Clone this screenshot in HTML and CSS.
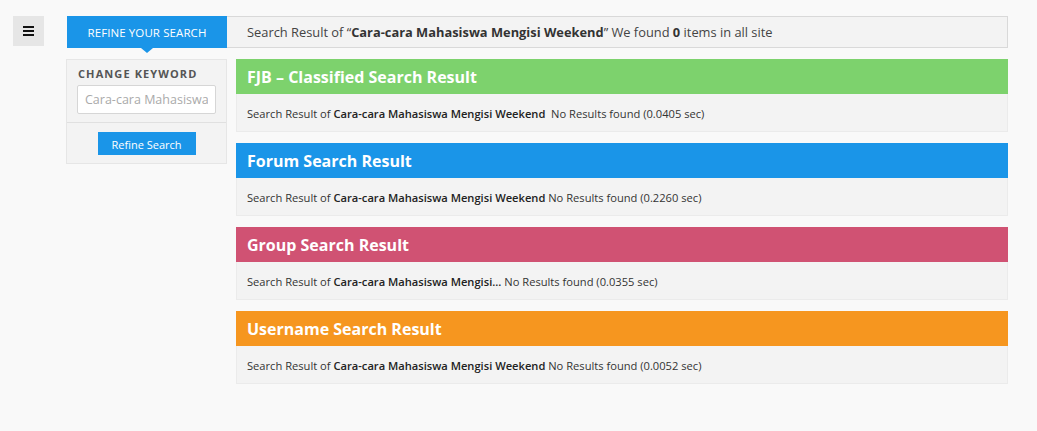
FILE: index.html
```html
<!DOCTYPE html>
<html>
<head>
<meta charset="utf-8">
<link rel="stylesheet" href="styles.css">
</head>
<body>
<div class="page">
  <button class="menu-btn" aria-label="menu">
    <svg width="11" height="10" viewBox="0 0 11 10"><rect x="0" y="0" width="11" height="2" fill="#111"/><rect x="0" y="4" width="11" height="2" fill="#111"/><rect x="0" y="8" width="11" height="2" fill="#111"/></svg>
  </button>
  <div class="main">
    <div class="topbar">
      <div class="tab">REFINE YOUR SEARCH</div>
      <div class="summary">Search Result of “<b>Cara-cara Mahasiswa Mengisi Weekend</b>” We found <b>0</b> items in all site</div>
    </div>
    <div class="columns">
      <aside class="sidebar">
        <div class="side-top">
          <div class="label">CHANGE KEYWORD</div>
          <input class="kw" type="text" value="Cara-cara Mahasiswa Mengisi Weekend">
        </div>
        <div class="side-bottom">
          <button class="refine">Refine Search</button>
        </div>
      </aside>
      <section class="results">
        <div class="block">
          <div class="head green">FJB – Classified Search Result</div>
          <div class="body">Search Result of <b>Cara-cara Mahasiswa Mengisi Weekend</b>&nbsp; No Results found (0.0405 sec)</div>
        </div>
        <div class="block">
          <div class="head blue">Forum Search Result</div>
          <div class="body">Search Result of <b>Cara-cara Mahasiswa Mengisi Weekend</b> No Results found (0.2260 sec)</div>
        </div>
        <div class="block">
          <div class="head pink">Group Search Result</div>
          <div class="body">Search Result of <b>Cara-cara Mahasiswa Mengisi...</b> No Results found (0.0355 sec)</div>
        </div>
        <div class="block">
          <div class="head orange">Username Search Result</div>
          <div class="body">Search Result of <b>Cara-cara Mahasiswa Mengisi Weekend</b> No Results found (0.0052 sec)</div>
        </div>
      </section>
    </div>
  </div>
</div>
</body>
</html>
```

FILE: styles.css
```css
* { box-sizing: border-box; }
html, body { margin: 0; padding: 0; }
body {
  background: #f9f9f9;
  font-family: "Open Sans", "DejaVu Sans", sans-serif;
  color: #333;
  width: 1037px;
  height: 431px;
  overflow: hidden;
}
.page {
  display: flex;
  align-items: flex-start;
  padding: 16px 0 0 13px;
  gap: 22px;
}
.menu-btn {
  width: 31px;
  height: 30px;
  border: none;
  background: #e6e6e6;
  display: flex;
  align-items: center;
  justify-content: center;
  padding: 0;
}
.main {
  width: 942px;
}
.topbar {
  display: flex;
  height: 32px;
  margin-left: 1px;
  background: #f3f3f3;
  border: 1px solid #d9d9d9;
  border-left: none;
}
.tab {
  position: relative;
  width: 160px;
  margin: -1px 0;
  background: #1a95e8;
  color: #fff;
  font-size: 11.5px;
  display: flex;
  align-items: center;
  justify-content: center;
  letter-spacing: 0.1px;
}
.tab::after {
  content: "";
  position: absolute;
  left: 74px;
  bottom: -5px;
  border-left: 6px solid transparent;
  border-right: 6px solid transparent;
  border-top: 5px solid #1a95e8;
}
.summary {
  font-size: 12.85px;
  color: #444;
  padding-left: 20px;
  display: flex;
  align-items: center;
  white-space: pre;
}
.summary b { color: #333; }
.columns {
  display: flex;
  gap: 9px;
  margin-top: 11px;
  align-items: flex-start;
}
.sidebar {
  width: 161px;
  background: #f3f3f3;
  border: 1px solid #e6e6e6;
}
.side-top {
  padding: 7px 10px 8px 10px;
  border-bottom: 1px solid #e0e0e0;
}
.label {
  font-size: 11px;
  font-weight: bold;
  color: #555;
  letter-spacing: 1.1px;
  line-height: 14px;
  margin-bottom: 4px;
  padding-left: 1px;
}
.kw {
  width: 139px;
  height: 29px;
  border: 1px solid #d6d6d6;
  border-radius: 2px;
  background: #fff;
  font-family: "Open Sans", sans-serif;
  font-size: 12.5px;
  color: #aaa;
  padding: 0 7px;
  outline: none;
}
.side-bottom {
  display: flex;
  justify-content: center;
  padding: 9px 0 8px;
}
.refine {
  width: 98px;
  height: 23px;
  border: none;
  background: #1a95e8;
  color: #fff;
  font-family: "Open Sans", sans-serif;
  font-size: 11px;
  padding: 1px 0 0;
}
.results {
  width: 772px;
  display: flex;
  flex-direction: column;
  gap: 11px;
}
.block {
  display: flex;
  flex-direction: column;
}
.head {
  height: 35px;
  color: #fff;
  font-weight: bold;
  font-size: 16px;
  padding-left: 11px;
  display: flex;
  align-items: center;
}
.green { background: #7dd26d; }
.blue { background: #1a95e8; }
.pink { background: #d05273; }
.orange { background: #f6961f; }
.body {
  height: 38px;
  background: #f3f3f3;
  border: 1px solid #ebebeb;
  border-top: none;
  font-size: 11.15px;
  color: #333;
  padding: 2px 0 0 10px;
  display: flex;
  align-items: center;
  white-space: pre;
}
.body b { color: #222; font-weight: 600; }
```
